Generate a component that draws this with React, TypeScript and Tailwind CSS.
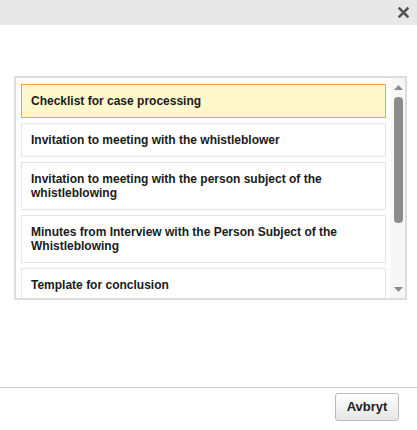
import React from 'react';

const templates = [
    'Checklist for case processing',
    'Invitation to meeting with the whistleblower',
    'Invitation to meeting with the person subject of the whistleblowing',
    'Minutes from Interview with the Person Subject of the Whistleblowing',
    'Template for conclusion',
];

export default function App() {
    return (
        <div className="w-[417px] h-[430px] bg-white flex flex-col font-['Liberation_Sans',Arial,sans-serif]">
            {/* Title bar */}
            <div className="h-[25px] bg-[#e8e8e8] flex items-center justify-end pr-[8px]">
                <svg width="11" height="11" viewBox="0 0 11 11">
                    <path d="M1.5 1.5 L9.5 9.5 M9.5 1.5 L1.5 9.5" stroke="#555" strokeWidth="2.6" strokeLinecap="square" />
                </svg>
            </div>

            {/* Body */}
            <div className="flex-1 pt-[51px] px-[14px]">
                <div className="w-[393px] h-[224px] border-2 border-[#dcdcdc] flex overflow-hidden">
                    <div className="flex-1 overflow-hidden pt-[6px] pl-[5px] pr-[5px] flex flex-col gap-[5px]">
                        {templates.map((t, i) => (
                            <div
                                key={t}
                                className={`shrink-0 px-[9px] py-[9px] text-[12px] leading-[14px] font-bold text-[#1a1a1a] border ${i === 0 ? 'bg-[#fff8cc] border-[#f5a442]' : 'bg-white border-[#e6e6e6]'}`}
                            >
                                {t}
                            </div>
                        ))}
                    </div>
                    {/* Scrollbar */}
                    <div className="w-[14px] bg-[#f7f7f7] flex flex-col items-center pt-[7px] pb-[6px]">
                        <svg width="9" height="5" viewBox="0 0 9 5">
                            <path d="M0 5 L4.5 0 L9 5 Z" fill="#8c8c8c" />
                        </svg>
                        <div className="mt-[7px] w-[9px] h-[126px] bg-[#8c8c8c] rounded-[4px]" />
                        <div className="flex-1" />
                        <svg width="9" height="5" viewBox="0 0 9 5">
                            <path d="M0 0 L9 0 L4.5 5 Z" fill="#8c8c8c" />
                        </svg>
                    </div>
                </div>
            </div>

            {/* Footer */}
            <div className="h-[43px] border-t border-[#cccccc] flex justify-end items-start pt-[5px] pr-[18px]">
                <button className="w-[64px] h-[28px] rounded-[3px] border border-[#bbbbbb] bg-gradient-to-b from-white to-[#e6e6e6] text-[13px] font-bold text-[#222]">
                    Avbryt
                </button>
            </div>
        </div>
    );
}
